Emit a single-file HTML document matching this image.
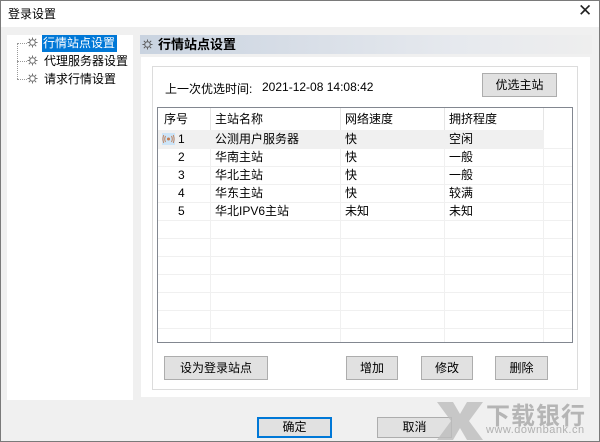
<!DOCTYPE html>
<html><head><meta charset="utf-8">
<style>
*{margin:0;padding:0;box-sizing:border-box}
body{width:600px;height:442px;overflow:hidden;background:#f0f0f0;font-family:"Liberation Sans","Noto Sans CJK SC",sans-serif;font-size:12px;color:#000;position:relative}
.abs{position:absolute}
.win{position:absolute;left:0;top:0;width:600px;height:442px;border-left:1px solid #7a7a7a;border-right:1px solid #7a7a7a;border-bottom:1px solid #7a7a7a}
.title{position:absolute;left:0;top:0;width:600px;height:27px;background:#fff;border-top:1px solid #7a7a7a}
.btn{position:absolute;background:#e1e1e1;border:1px solid #adadad;text-align:center;font-size:12px}
.gear{position:absolute;width:11px;height:11px}
.cell{position:absolute;height:18px;line-height:18px;white-space:nowrap}
</style></head><body>
<div class="title"></div>
<div class="abs" style="left:8px;top:5px;font-size:12px">登录设置</div>
<div class="abs" style="left:578px;top:1px;font-size:17px;font-weight:300;color:#222">✕</div>

<!-- left tree -->
<div class="abs" style="left:7px;top:35px;width:126px;height:365px;background:#fff"></div>
<div class="abs" style="left:17px;top:43px;width:1px;height:36px;border-left:1px dotted #999"></div>
<div class="abs" style="left:17px;top:43px;width:10px;border-top:1px dotted #999"></div>
<div class="abs" style="left:17px;top:61px;width:10px;border-top:1px dotted #999"></div>
<div class="abs" style="left:17px;top:79px;width:10px;border-top:1px dotted #999"></div>
<svg class="gear" style="left:27px;top:37px" viewBox="0 0 12 12"><circle cx="6" cy="6" r="3" fill="none" stroke="#666"/><g stroke="#666"><line x1="6" y1="0.5" x2="6" y2="2.5"/><line x1="6" y1="9.5" x2="6" y2="11.5"/><line x1="0.5" y1="6" x2="2.5" y2="6"/><line x1="9.5" y1="6" x2="11.5" y2="6"/><line x1="2" y1="2" x2="3.4" y2="3.4"/><line x1="8.6" y1="8.6" x2="10" y2="10"/><line x1="2" y1="10" x2="3.4" y2="8.6"/><line x1="8.6" y1="3.4" x2="10" y2="2"/></g></svg>
<svg class="gear" style="left:27px;top:55px" viewBox="0 0 12 12"><circle cx="6" cy="6" r="3" fill="none" stroke="#666"/><g stroke="#666"><line x1="6" y1="0.5" x2="6" y2="2.5"/><line x1="6" y1="9.5" x2="6" y2="11.5"/><line x1="0.5" y1="6" x2="2.5" y2="6"/><line x1="9.5" y1="6" x2="11.5" y2="6"/><line x1="2" y1="2" x2="3.4" y2="3.4"/><line x1="8.6" y1="8.6" x2="10" y2="10"/><line x1="2" y1="10" x2="3.4" y2="8.6"/><line x1="8.6" y1="3.4" x2="10" y2="2"/></g></svg>
<svg class="gear" style="left:27px;top:73px" viewBox="0 0 12 12"><circle cx="6" cy="6" r="3" fill="none" stroke="#666"/><g stroke="#666"><line x1="6" y1="0.5" x2="6" y2="2.5"/><line x1="6" y1="9.5" x2="6" y2="11.5"/><line x1="0.5" y1="6" x2="2.5" y2="6"/><line x1="9.5" y1="6" x2="11.5" y2="6"/><line x1="2" y1="2" x2="3.4" y2="3.4"/><line x1="8.6" y1="8.6" x2="10" y2="10"/><line x1="2" y1="10" x2="3.4" y2="8.6"/><line x1="8.6" y1="3.4" x2="10" y2="2"/></g></svg>
<div class="abs" style="left:42px;top:35px;height:17px;background:#0078d7;color:#fff;line-height:17px;padding:0 2px 0 1px;white-space:nowrap">行情站点设置</div>
<div class="abs" style="left:44px;top:53px;line-height:17px;white-space:nowrap">代理服务器设置</div>
<div class="abs" style="left:44px;top:71px;line-height:17px;white-space:nowrap">请求行情设置</div>

<!-- right header -->
<div class="abs" style="left:140px;top:35px;width:452px;height:19px;background:linear-gradient(to right,#c9d3e0,#e6e9ee 70%,#eeeeee)"></div>
<svg class="gear" style="left:142px;top:39px" viewBox="0 0 12 12"><circle cx="6" cy="6" r="3" fill="none" stroke="#555"/><g stroke="#555"><line x1="6" y1="0.5" x2="6" y2="2.5"/><line x1="6" y1="9.5" x2="6" y2="11.5"/><line x1="0.5" y1="6" x2="2.5" y2="6"/><line x1="9.5" y1="6" x2="11.5" y2="6"/><line x1="2" y1="2" x2="3.4" y2="3.4"/><line x1="8.6" y1="8.6" x2="10" y2="10"/><line x1="2" y1="10" x2="3.4" y2="8.6"/><line x1="8.6" y1="3.4" x2="10" y2="2"/></g></svg>
<div class="abs" style="left:158px;top:35px;line-height:19px;font-size:13px;font-weight:bold">行情站点设置</div>

<!-- white panel -->
<div class="abs" style="left:141px;top:57px;width:449px;height:340px;background:#fff"></div>
<div class="abs" style="left:152px;top:66px;width:426px;height:324px;border:1px solid #dcdcdc"></div>
<div class="abs" style="left:165px;top:80px">上一次优选时间:</div>
<div class="abs" style="left:262px;top:80px">2021-12-08 14:08:42</div>
<div class="btn" style="left:482px;top:73px;width:75px;height:24px;line-height:22px">优选主站</div>

<!-- table -->
<div class="abs" style="left:157px;top:107px;width:416px;height:236px;border:1px solid #828790;background:#fff;overflow:hidden">
  <div class="abs" style="left:52px;top:0;width:1px;height:236px;background:#f0f0f0"></div>
  <div class="abs" style="left:182px;top:0;width:1px;height:236px;background:#f0f0f0"></div>
  <div class="abs" style="left:286px;top:0;width:1px;height:236px;background:#f0f0f0"></div>
  <div class="abs" style="left:385px;top:0;width:1px;height:236px;background:#f0f0f0"></div>
  <div class="abs" style="left:52px;top:0;width:1px;height:22px;background:#e5e5e5"></div>
  <div class="abs" style="left:182px;top:0;width:1px;height:22px;background:#e5e5e5"></div>
  <div class="abs" style="left:286px;top:0;width:1px;height:22px;background:#e5e5e5"></div>
  <div class="abs" style="left:385px;top:0;width:1px;height:22px;background:#e5e5e5"></div>
  <div class="abs" style="left:0;top:22px;width:385px;height:18px;background:#f0f0f0"></div>
  <div class="abs" style="left:0;top:40px;width:414px;height:1px;background:#f0f0f0"></div>
  <div class="abs" style="left:0;top:58px;width:414px;height:1px;background:#f0f0f0"></div>
  <div class="abs" style="left:0;top:76px;width:414px;height:1px;background:#f0f0f0"></div>
  <div class="abs" style="left:0;top:94px;width:414px;height:1px;background:#f0f0f0"></div>
  <div class="abs" style="left:0;top:112px;width:414px;height:1px;background:#f0f0f0"></div>
  <div class="abs" style="left:0;top:130px;width:414px;height:1px;background:#f0f0f0"></div>
  <div class="abs" style="left:0;top:148px;width:414px;height:1px;background:#f0f0f0"></div>
  <div class="abs" style="left:0;top:166px;width:414px;height:1px;background:#f0f0f0"></div>
  <div class="abs" style="left:0;top:184px;width:414px;height:1px;background:#f0f0f0"></div>
  <div class="abs" style="left:0;top:202px;width:414px;height:1px;background:#f0f0f0"></div>
  <div class="abs" style="left:0;top:220px;width:414px;height:1px;background:#f0f0f0"></div>
  <div class="cell" style="left:6px;top:2px">序号</div>
  <div class="cell" style="left:57px;top:2px">主站名称</div>
  <div class="cell" style="left:187px;top:2px">网络速度</div>
  <div class="cell" style="left:291px;top:2px">拥挤程度</div>
  <div class="abs" style="left:4px;top:25px;width:13px;height:12px;background:#cce4f7"></div>
  <svg class="abs" style="left:4px;top:25px" width="13" height="12" viewBox="0 0 13 12"><circle cx="6.5" cy="6" r="1.5" fill="#c07a50"/><path d="M3.5 3Q2 6 3.5 9M9.5 3Q11 6 9.5 9M1.8 2Q0 6 1.8 10M11.2 2Q13 6 11.2 10" fill="none" stroke="#c07a50" stroke-width="0.9"/></svg>
  <div class="cell" style="left:20px;top:22px">1</div>
  <div class="cell" style="left:57px;top:22px">公测用户服务器</div>
  <div class="cell" style="left:187px;top:22px">快</div>
  <div class="cell" style="left:291px;top:22px">空闲</div>
  <div class="cell" style="left:20px;top:40px">2</div>
  <div class="cell" style="left:57px;top:40px">华南主站</div>
  <div class="cell" style="left:187px;top:40px">快</div>
  <div class="cell" style="left:291px;top:40px">一般</div>
  <div class="cell" style="left:20px;top:58px">3</div>
  <div class="cell" style="left:57px;top:58px">华北主站</div>
  <div class="cell" style="left:187px;top:58px">快</div>
  <div class="cell" style="left:291px;top:58px">一般</div>
  <div class="cell" style="left:20px;top:76px">4</div>
  <div class="cell" style="left:57px;top:76px">华东主站</div>
  <div class="cell" style="left:187px;top:76px">快</div>
  <div class="cell" style="left:291px;top:76px">较满</div>
  <div class="cell" style="left:20px;top:94px">5</div>
  <div class="cell" style="left:57px;top:94px">华北IPV6主站</div>
  <div class="cell" style="left:187px;top:94px">未知</div>
  <div class="cell" style="left:291px;top:94px">未知</div>
</div>

<div class="btn" style="left:164px;top:356px;width:104px;height:24px;line-height:22px">设为登录站点</div>
<div class="btn" style="left:346px;top:356px;width:52px;height:24px;line-height:22px">增加</div>
<div class="btn" style="left:421px;top:356px;width:52px;height:24px;line-height:22px">修改</div>
<div class="btn" style="left:495px;top:356px;width:53px;height:24px;line-height:22px">删除</div>

<div class="btn" style="left:257px;top:417px;width:75px;height:21px;line-height:17px;border:2px solid #0078d7">确定</div>
<div class="btn" style="left:377px;top:417px;width:75px;height:21px;line-height:19px">取消</div>

<!-- watermark -->
<svg class="abs" style="left:435px;top:400px" width="50" height="42" viewBox="0 0 50 42"><path d="M2 2L18 2L25 14L32 2L48 2L34 21L48 40L32 40L25 28L18 40L2 40L16 21Z" fill="#bdbdbd" opacity="0.8"/></svg>
<div class="abs" style="left:486px;top:396px;font-size:24px;font-weight:bold;color:#b5b5b5;letter-spacing:1px">下载银行</div>
<div class="abs" style="left:486px;top:424px;font-size:11px;color:#b0b0b0;letter-spacing:0.5px">www.downbank.cn</div>
<div class="win"></div>
</body></html>
